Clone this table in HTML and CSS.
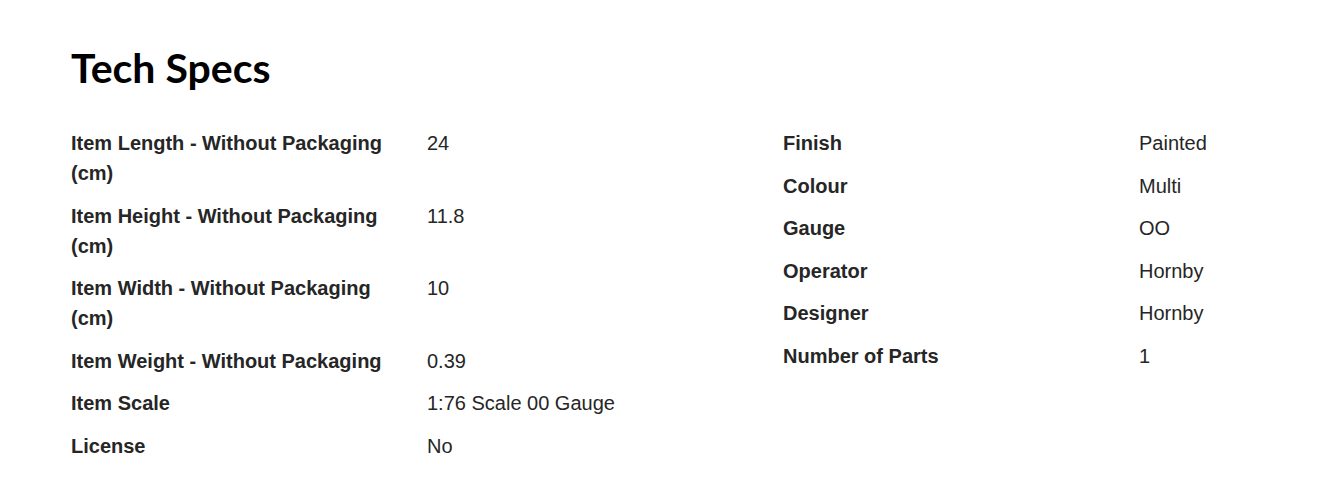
FILE: index.html
```html
<!DOCTYPE html>
<html lang="en">
<head>
<meta charset="utf-8">
<title>Tech Specs</title>
<link rel="stylesheet" href="styles.css">
</head>
<body>
<section class="specs">
  <h2 class="specs-title">Tech Specs</h2>
  <div class="specs-grid">
    <dl class="spec-list">
      <div class="spec-row"><dt>Item Length - Without Packaging (cm)</dt><dd>24</dd></div>
      <div class="spec-row"><dt>Item Height - Without Packaging (cm)</dt><dd>11.8</dd></div>
      <div class="spec-row"><dt>Item Width - Without Packaging (cm)</dt><dd>10</dd></div>
      <div class="spec-row"><dt>Item Weight - Without Packaging</dt><dd>0.39</dd></div>
      <div class="spec-row"><dt>Item Scale</dt><dd>1:76 Scale 00 Gauge</dd></div>
      <div class="spec-row"><dt>License</dt><dd>No</dd></div>
    </dl>
    <dl class="spec-list">
      <div class="spec-row"><dt>Finish</dt><dd>Painted</dd></div>
      <div class="spec-row"><dt>Colour</dt><dd>Multi</dd></div>
      <div class="spec-row"><dt>Gauge</dt><dd>OO</dd></div>
      <div class="spec-row"><dt>Operator</dt><dd>Hornby</dd></div>
      <div class="spec-row"><dt>Designer</dt><dd>Hornby</dd></div>
      <div class="spec-row"><dt>Number of Parts</dt><dd>1</dd></div>
    </dl>
  </div>
</section>
</body>
</html>
```
FILE: styles.css
```css
html, body {
  margin: 0;
  padding: 0;
  background: #fff;
}
body {
  font-family: "Liberation Sans", Arial, sans-serif;
  color: #262626;
}
.specs {
  padding: 38px 70px 0 71px;
}
.specs-title {
  margin: 0 0 24px 0;
  font-family: Lato, "Open Sans", sans-serif;
  font-weight: 700;
  font-size: 41px;
  line-height: 60px;
  color: #000;
  letter-spacing: 0;
}
.specs-grid {
  display: grid;
  grid-template-columns: 712px 1fr;
}
.spec-list {
  margin: 0;
  padding: 0;
}
.spec-row {
  display: grid;
  grid-template-columns: 356px 1fr;
  padding: 6.25px 0;
  font-size: 20px;
  line-height: 30px;
}
.spec-row dt {
  font-weight: 700;
  padding-right: 20px;
}
.spec-row dd {
  margin: 0;
}
```
